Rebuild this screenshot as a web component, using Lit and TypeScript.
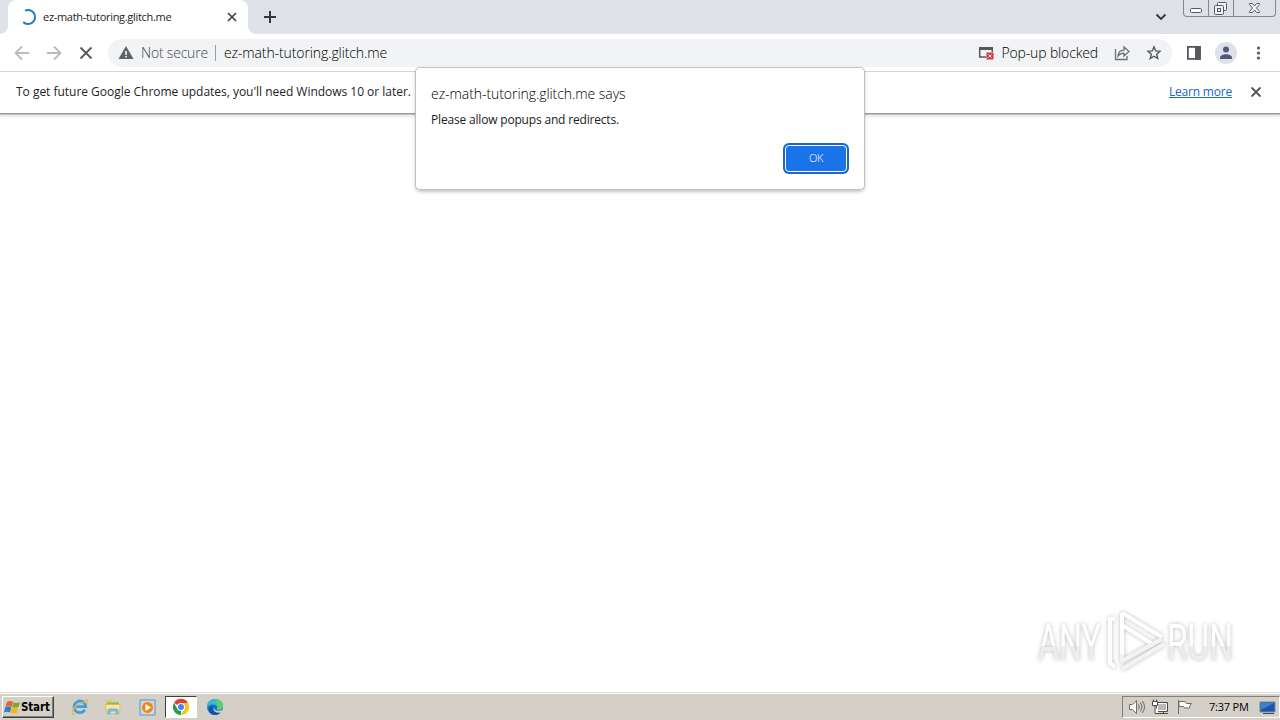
import { LitElement, html, svg, css } from "lit";
import { customElement } from "lit/decorators.js";

const stroke = (d: string, color: string, w = 1.6) => svg`<path d=${d} fill="none" stroke=${color} stroke-width=${w} />`;

@customElement("app-root")
export class AppRoot extends LitElement {
  static styles = css`
    :host { display: block; width: 1280px; height: 720px; overflow: hidden; background: #fff; color: #222326; font-family: "Open Sans", "Noto Sans", sans-serif; font-weight: 300; }
    * { box-sizing: border-box; }
    svg { display: block; flex: none; overflow: visible; }
    span { white-space: nowrap; }
    .screen { position: relative; display: flex; flex-direction: column; height: 720px; }
    .tabs { display: flex; height: 34px; background: #dee1e8; padding-left: 8px; align-items: flex-start; }
    .tab { position: relative; display: flex; align-items: center; width: 240px; height: 34px; background: #fff; border-radius: 8px 8px 0 0; padding: 0 10px 0 12px; }
    .tab::before, .tab::after { content: ""; position: absolute; bottom: 0; width: 8px; height: 8px; }
    .tab::before { left: -8px; background: radial-gradient(circle at 0 0, transparent 7.5px, #fff 8px); }
    .tab::after { right: -8px; background: radial-gradient(circle at 100% 0, transparent 7.5px, #fff 8px); }
    .tabname { flex: 1; margin-left: 7px; font-size: 11px; font-weight: 400; letter-spacing: -0.3px; padding-bottom: 1px; }
    .plus { margin: 10px 0 0 15px; }
    .chev { margin: 13px 16px 0 auto; }
    .controls { display: flex; width: 93px; height: 17px; border: 1px solid #85878e; border-top: 0; border-radius: 0 0 4px 4px; margin-right: 4px; }
    .controls svg + svg { border-left: 1px solid #85878e; }
    .toolbar { display: flex; height: 38px; align-items: center; border-bottom: 1px solid #d5d6d8; padding: 0 0 0 12px; }
    .nav { display: flex; gap: 12px; margin-right: 12px; }
    .omni { display: flex; align-items: center; height: 28px; width: 1064px; border-radius: 14px; background: #f1f3f4; padding: 0 9px 0 8px; font-size: 14px; color: #000; }
    .secure { color: #45484d; margin-left: 5px; letter-spacing: -.2px; }
    .url { letter-spacing: -.1px; }
    .sep { width: 1px; height: 16px; background: #9b9ea3; margin: 0 8px 0 7px; }
    .blocked { margin-left: 6px; margin-right: 15px; letter-spacing: -.15px; }
    .grow { flex: 1; }
    .info { display: flex; height: 41px; align-items: center; padding: 0 16px 2px; font-size: 12px; font-weight: 400; box-shadow: 0 1px #999, 0 2px #c4c4c4, 0 4px 2px #e8e8e8; }
    .notice { letter-spacing: -.02px; }
    .link { color: #1967c9; text-decoration: underline; margin-right: 16px; letter-spacing: -.2px; }
    .dialog { position: absolute; left: 416px; top: 68px; width: 448px; height: 121px; border-radius: 4px; background: #fff; box-shadow: 0 0 0 1px #c1c2c4, 0 2px 4px #0005; padding: 16px 16px 0 15px; display: flex; flex-direction: column; }
    .heading { font-size: 14px; line-height: 20px; color: #000; letter-spacing: -.06px; }
    .message { font-size: 12px; font-weight: 400; line-height: 18px; margin-top: 7px; color: #202124; letter-spacing: -.18px; }
    .ok { align-self: flex-end; margin-top: 16px; width: 62px; height: 27px; border: 1px solid #fff; border-radius: 4px; background: #1a73e8; box-shadow: 0 0 0 2px #1a66cc; color: #fff; display: flex; align-items: center; justify-content: center; font-size: 11px; letter-spacing: -.3px; padding-bottom: 3px; margin-right: 1px; }
    .page { flex: 1; }
    .mark { position: absolute; left: 1030px; top: 602px; filter: drop-shadow(0 0 2px #0004); font-family: "Roboto", sans-serif; font-weight: 400; }
    .task { display: flex; align-items: center; height: 28px; background: #d4d0c8; box-shadow: inset 0 1px #dedbd5, inset 0 2px #fff; padding: 2px 0 0 2px; }
    .start { display: flex; align-items: center; width: 52px; height: 22px; border: 1px solid; border-color: #fff #404040 #404040 #fff; box-shadow: inset -1px -1px #808080; padding-left: 1px; font: bold 11.5px "DejaVu Sans Condensed", "DejaVu Sans", sans-serif; font-stretch: condensed; color: #000; letter-spacing: -.15px; }
    .quick { display: flex; align-items: center; margin-left: 9px; gap: 2px; }
    .slot { display: flex; width: 32px; height: 22px; justify-content: center; align-items: center; }
    .active { background: #fff; border: 1px solid; border-color: #404040 #fff #fff #404040; }
    .tray { display: flex; align-items: center; height: 22px; width: 158px; margin-left: auto; border: 1px solid; border-color: #808080 #fff #fff #808080; padding-left: 5px; color: #000; font-size: 11px; font-weight: 400; gap: 6px; }
    .clock { margin-left: 9px; letter-spacing: -.2px; width: 40px; padding-bottom: 1px; }
    .share { margin-right: 14px; }
    .side { margin-left: 7px; }
    .desk { margin-left: 4px; }
  `;

  private taskbar() {
    return html`<div class="task">
      <div class="start">
        <svg width="17" height="18"><path d="M3 4Q6 2 9 4L7.500 9Q5 7 1.500 8.500z" fill="#e8622a"/><path d="M9.500 4.300Q13 6 16 4L14.500 9Q11.500 10.500 8 9z" fill="#72ad32"/><path d="M1.300 9Q5 7.500 7.200 9.500L6 14.500Q3 13 0 14.500z" fill="#337bc6"/><path d="M7.800 9.600Q11 11 14.200 9.500L13 15Q9.500 16.500 6.500 15z" fill="#f5b51b"/></svg><span>Start</span>
      </div>
      <div class="quick">
        <div class="slot"><svg width="16" height="18"><path d="M13.800 11.800A5.800 5.800 0 1 1 14.600 8.700H5" fill="none" stroke="#3f9ede" stroke-width="2.800"/><path d="M12.500 3.200C17 .2 18 2.500 15.500 6M15 4C9 4 4 8 2 12 .2 15.500 1 17.500 4 16.300" fill="none" stroke="#e4b64d" stroke-width="1.200"/></svg></div>
        <div class="slot"><svg width="18" height="18"><path d="M2 2h5l1 1.500h7v11H2z" fill="#edc75b"/><path d="M3 4.500h12v3H3z" fill="#80bb67"/><path d="M1.500 6.500H16l-.500 9h-13z" fill="#f8e79d" stroke="#d9b650" stroke-width=".7"/><path d="M3.500 16.500v-4q0-2 2-2h7q2 0 2 2v4h-3v-3h-5v3z" fill="#79b8df"/></svg></div>
        <div class="slot"><svg width="17" height="17"><path d="M1 1h15v15H1z" fill="#b8dcf3" stroke="#5a93c8"/><circle cx="8.500" cy="8.500" r="6" fill="#f18518" stroke="#fff5d8" stroke-width=".6"/><path d="M6.500 5v7l5.500-3.500z" fill="#fff"/></svg></div>
        <div class="slot active"><svg width="18" height="18"><path d="M9 9 2 5A8 8 0 0 1 16 5z" fill="#e34133"/><path d="M9 9 9 17A8 8 0 0 1 2 5L5.500 11z" fill="#279a4b"/><path d="M9 5h7A8 8 0 0 1 9 17L12.500 11z" fill="#fbc116"/><circle cx="9" cy="9" r="4" fill="#fff"/><circle cx="9" cy="9" r="3" fill="#4285f4"/></svg></div>
        <div class="slot"><svg width="18" height="18"><circle cx="9" cy="9" r="8" fill="#1672c7"/><path d="M1 8C2-.5 16-1.500 17 8c0 4-4 4.500-6 3.500 1-2 0-5-4-5C4 6.500 1 8 1 11z" fill="#35bbd0"/><path d="M9 1c5 0 8 3 8 7 0 4-4 4.500-6 3.500 2-4-1-7-2-10.500z" fill="#62ca75"/><path d="M7 8c-3 5 2 8 8 6-4 5-12 3-12-2 0-2 2-4 4-4z" fill="#1452a0"/><path d="M9 8.500c-2 3 1 5.500 8.500 3.500l-2 2.500C9 15.500 6 12 9 8.500z" fill="#d4d0c8"/></svg></div>
      </div>
      <div class="tray">
        <svg width="18" height="18" fill="none" stroke="#6e6d69"><path d="M1.500 6.500h3l4-4v13l-4-4h-3z" fill="#fff"/><path d="M10.500 6.500q1.500 2.500 0 5M12.500 4.500q3 4.500 0 9M14.500 3q4 6 0 12"/></svg>
        <svg width="18" height="18" fill="none" stroke="#4d4c49"><path d="M4.500 4.500h11v9h-11z" fill="#b9b8b4"/><path d="M5.500 5.500h9v7h-9z" stroke="#fff"/><path d="M7 15.500h9M11.500 13.500v2"/><path d="M.5 3.500h5v4h-5zM1.500 1.500v2M4.500 1.500v2M3 7.500v8h4" fill="#fff"/></svg>
        <svg width="18" height="18" fill="#fff" stroke="#6e6d69"><path d="M2.500 2v14M3 3.500h6l1.500 2h5q-2 2-2 4.500H8.500l-1-1.500H3z"/></svg>
        <span class="clock">7:37 PM</span>
        <svg class="desk" width="17" height="18"><path d="M1 4h15v10H1z" fill="#1d54a5" stroke="#778ca7"/><path d="M2 5h13L2 12z" fill="#3c81cb"/><path d="M4 15.500h11" stroke="#344b6b"/></svg>
      </div>
    </div>`;
  }

  render() {
    return html`<div class="screen">
      <div class="tabs">
        <div class="tab">
          <svg width="16" height="16">${stroke("M5 1.7A7 7 0 1 1 3.2 13", "#2478cf", 2)}</svg>
          <span class="tabname">ez-math-tutoring.glitch.me</span>
          <svg width="12" height="12">${stroke("M2 2 10 10M10 2 2 10", "#3c4043", 1.7)}</svg>
        </div>
        <svg class="plus" width="14" height="14">${stroke("M7 1V13M1 7H13", "#35363f", 2)}</svg>
        <svg class="chev" width="12" height="8">${stroke("M1.5 1.5 6 6 10.5 1.5", "#35363f", 1.9)}</svg>
        <div class="controls">
          <svg width="24" height="16"><rect x="6.500" y="8.500" width="11" height="4" rx="1" fill="#fafafa" stroke="#555966"/></svg>
          <svg width="25" height="16" fill="#f0f1f4" stroke="#555966"><rect x="8.500" y="2.500" width="9" height="8" rx="1"/><rect x="5.500" y="5.500" width="9" height="9" rx="1"/><rect x="8.500" y="8.500" width="3" height="3"/></svg>
          <svg width="42" height="16"><path d="M15.500 3.500h3L20.500 6l2-2.500h3v1l-3 3.500 3 3.500v1h-3L20.500 10l-2 2.500h-3v-1l3-3.500-3-3.500z" fill="#fafafa" stroke="#555966"/></svg>
        </div>
      </div>
      <div class="toolbar">
        <div class="nav">
          <svg width="20" height="20">${stroke("M17 10H4M10 3.5 3.5 10 10 16.5", "#b8babd", 1.8)}</svg>
          <svg width="20" height="20">${stroke("M3 10H16M10 3.5 16.5 10 10 16.5", "#b8babd", 1.8)}</svg>
          <svg width="20" height="20">${stroke("M4.500 4.500 15.500 15.500M15.500 4.500 4.500 15.500", "#55585d", 1.8)}</svg>
        </div>
        <div class="omni">
          <svg width="20" height="18"><path d="M10 2 17.500 15H2.500z" fill="#5f6368"/><path d="M9.300 7h1.500v4H9.300zM9.300 12h1.500v1.500H9.300z" fill="#fff"/></svg>
          <span class="secure">Not secure</span><i class="sep"></i><span class="url">ez-math-tutoring.glitch.me</span>
          <div class="grow"></div>
          <svg width="17" height="16"><path d="M1.700 3V12H8M14.300 3V7" fill="none" stroke="#55585d" stroke-width="1.500"/><path d="M1 2H15V5H1z" fill="#55585d"/><path d="M8.500 7.500h7v7h-7z" fill="#d5393d"/>${stroke("M10.5 9.5l3 3m0-3-3 3", "#fff", 1)}</svg>
          <span class="blocked">Pop-up blocked</span>
          <svg class="share" width="18" height="18">${stroke("M2.5 5V15.5H14V12M5 12C5.3 8 7.5 6.3 11 6.2V3L16 7.5 11 12V9.2C8 9.2 6.5 10 5 12z", "#6c6f74", 1.3)}</svg>
          <svg width="18" height="18">${stroke("M9 2.800 10.700 6.900l4.300.4-3.300 2.900 1 4.300L9 12.200l-3.700 2.300 1-4.300L3 7.300l4.300-.4z", "#55585d", 1.4)}</svg>
        </div>
        <svg class="side" width="96" height="28"><rect x="8.900" y="7.900" width="12" height="12" fill="#fff" stroke="#55585d" stroke-width="1.8"/><path d="M16 7h5.800v13.800H16z" fill="#55585d"/><circle cx="47" cy="14" r="11" fill="#dee1e8"/><circle cx="47" cy="10.500" r="3" fill="#525b72"/><path d="M41 19c0-5 12-5 12 0v1H41z" fill="#525b72"/><g fill="#55585d"><circle cx="79.500" cy="9" r="1.600"/><circle cx="79.500" cy="14" r="1.600"/><circle cx="79.500" cy="19" r="1.600"/></g></svg>
      </div>
      <div class="info"><span class="notice">To get future Google Chrome updates, you'll need Windows 10 or later.</span><div class="grow"></div><span class="link">Learn more</span><svg width="16" height="16">${stroke("M3.5 3.5 12.5 12.5M12.5 3.5 3.5 12.5", "#55585d", 1.9)}</svg></div>
      <div class="page"></div>
      ${this.taskbar()}
      <svg class="mark" width="210" height="76">
        <defs><linearGradient id="shade" x1="0" y1="0" x2="0" y2="1"><stop offset=".55" stop-color="#fff"/><stop offset=".56" stop-color="#ededed"/></linearGradient></defs>
        <text x="8" y="58" font-size="50" textLength="63" lengthAdjust="spacingAndGlyphs" fill="url(#shade)">ANY</text>
        <text x="137" y="58" font-size="50" textLength="66" lengthAdjust="spacingAndGlyphs" fill="url(#shade)">RUN</text>
        <path d="M92 11V55M92 11 132 35M85 17h-5V61l5 4M92 23 124 43" fill="none" stroke="#fff" stroke-width="4" stroke-linejoin="round"/>
        <path d="M92 52V59L132 37M92 67 134 42" fill="none" stroke="#f3f3f3" stroke-width="4" stroke-linejoin="round"/>
      </svg>
      <div class="dialog"><span class="heading">ez-math-tutoring.glitch.me says</span><span class="message">Please allow popups and redirects.</span><div class="ok">OK</div></div>
    </div>`;
  }
}
